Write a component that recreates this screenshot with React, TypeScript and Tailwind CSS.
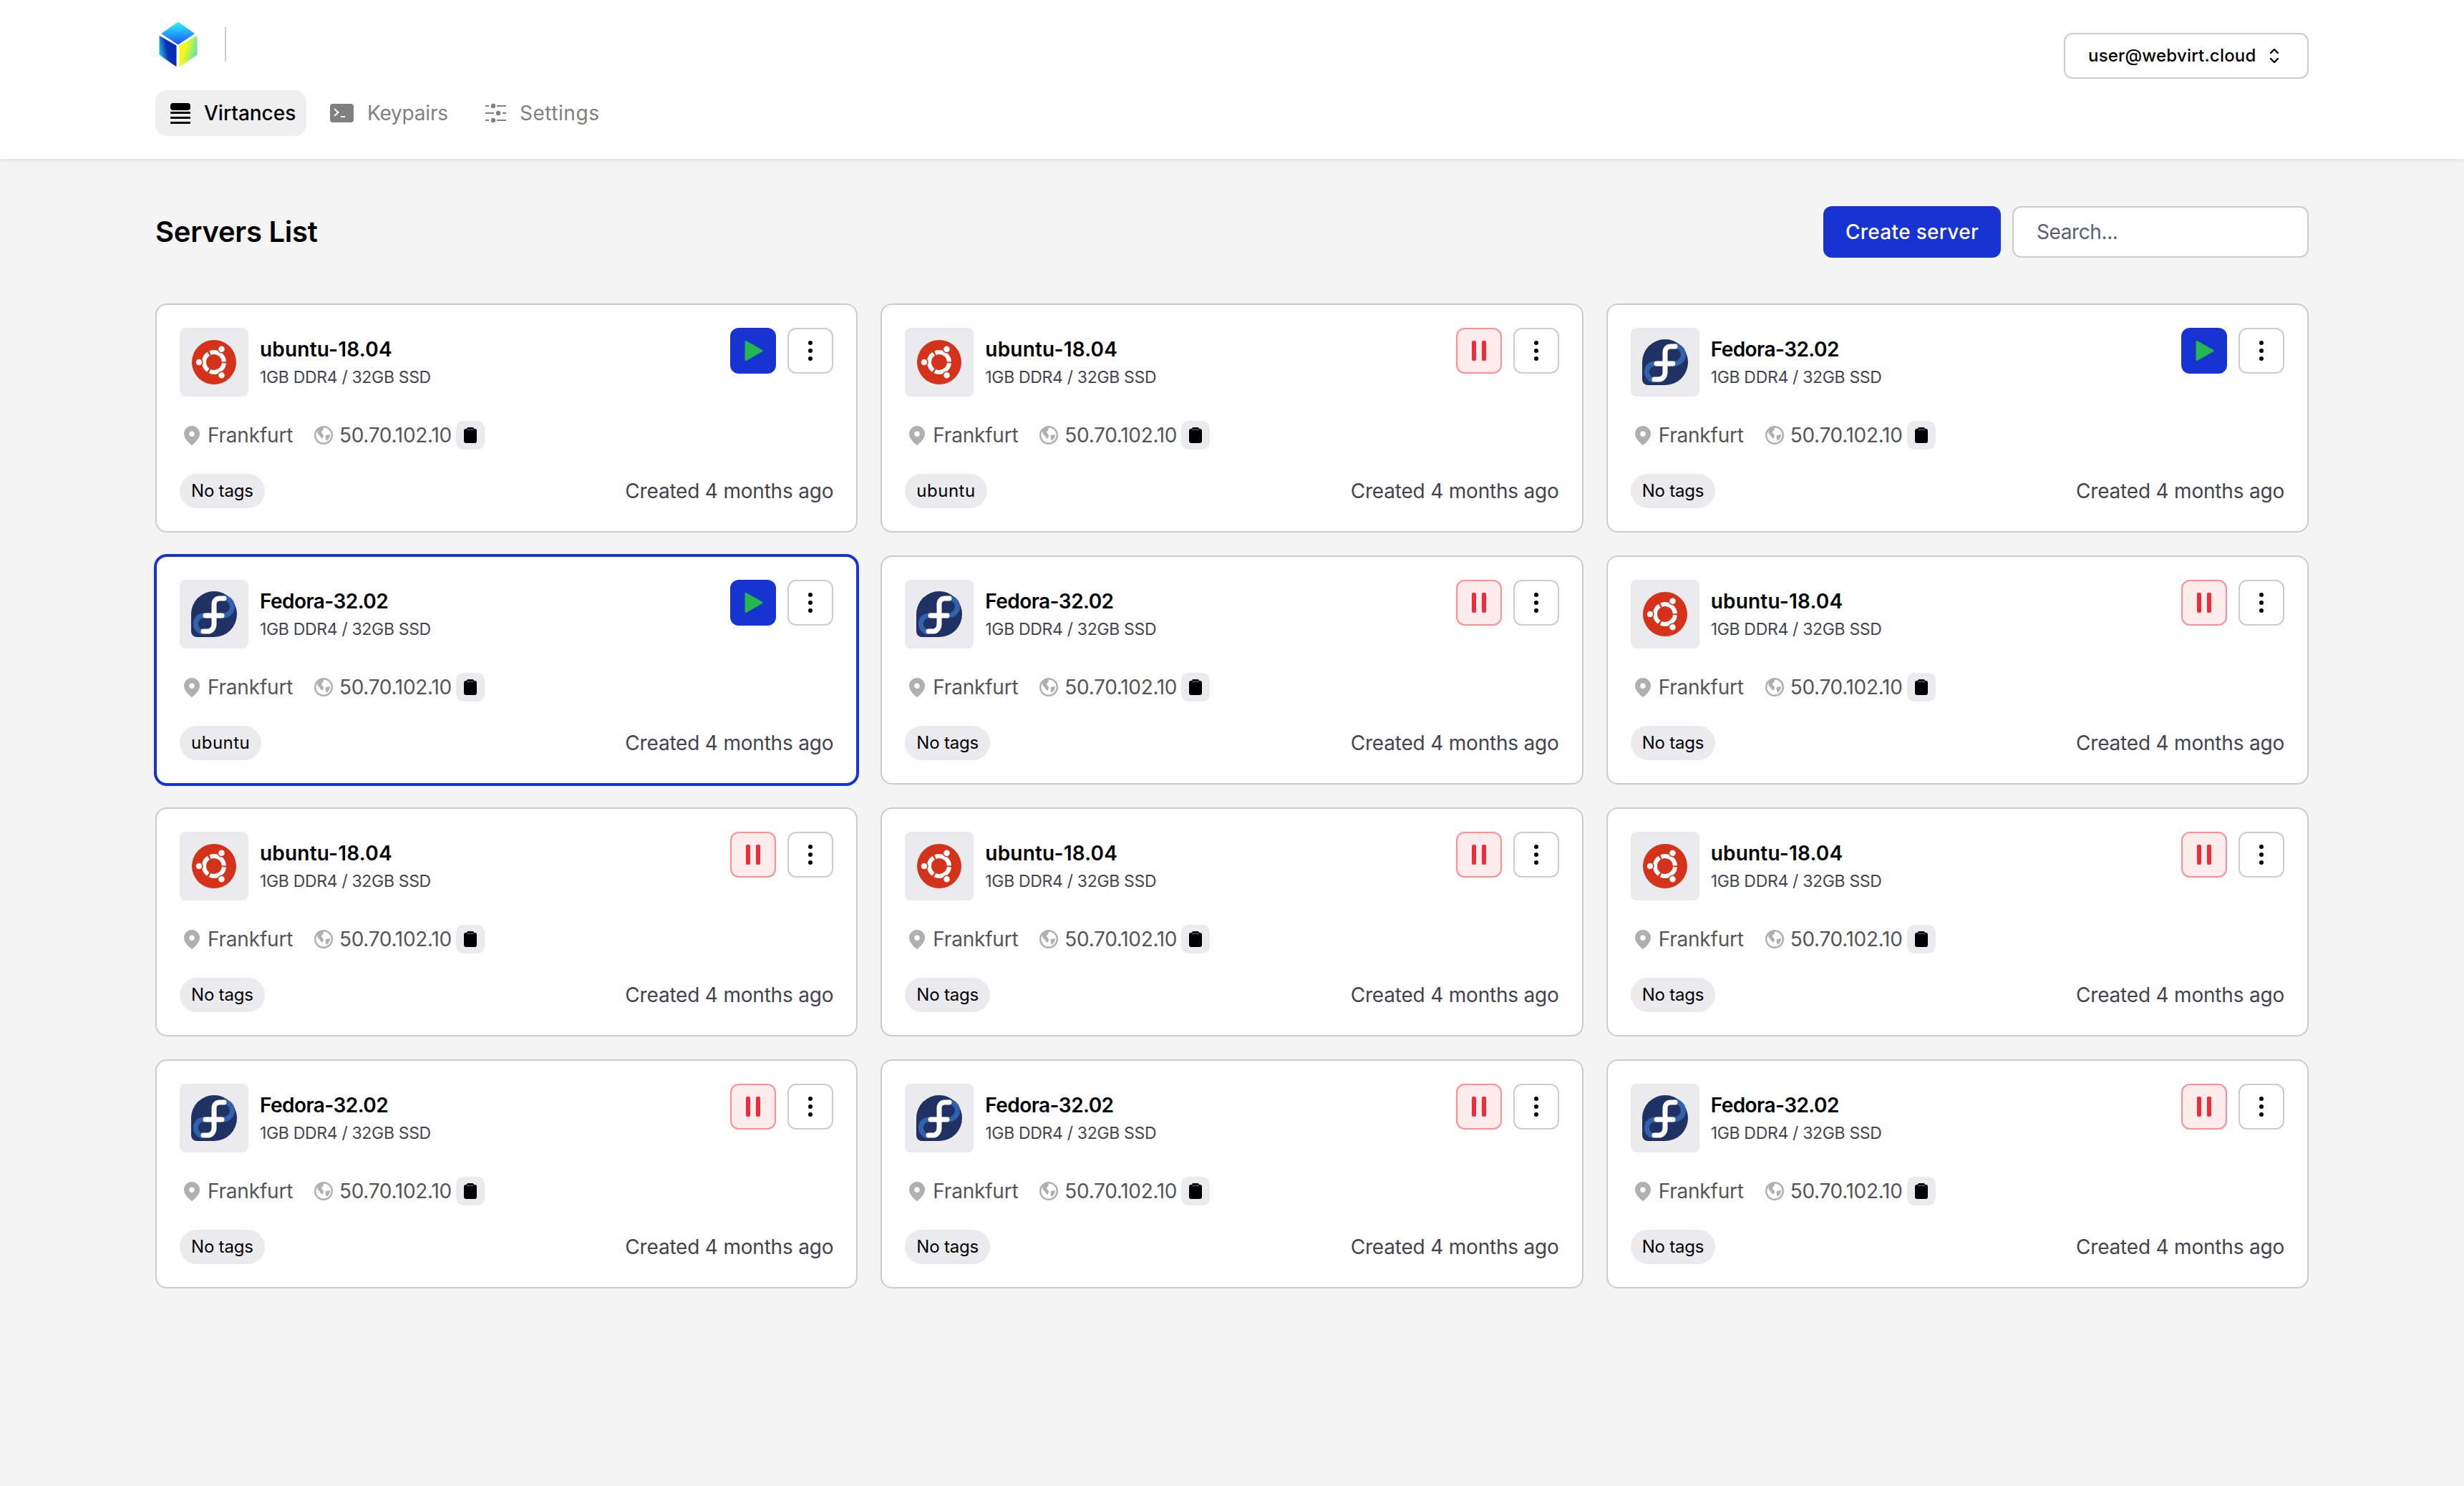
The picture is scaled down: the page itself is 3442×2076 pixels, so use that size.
const servers = [
  { os: "ubuntu", running: false, tag: "No tags" },
  { os: "ubuntu", running: true, tag: "ubuntu" },
  { os: "fedora", running: false, tag: "No tags" },
  { os: "fedora", running: false, tag: "ubuntu", selected: true },
  { os: "fedora", running: true, tag: "No tags" },
  { os: "ubuntu", running: true, tag: "No tags" },
  { os: "ubuntu", running: true, tag: "No tags" },
  { os: "ubuntu", running: true, tag: "No tags" },
  { os: "ubuntu", running: true, tag: "No tags" },
  { os: "fedora", running: true, tag: "No tags" },
  { os: "fedora", running: true, tag: "No tags" },
  { os: "fedora", running: true, tag: "No tags" },
];

const CubeLogo = () => (
  <svg width="54" height="62" viewBox="0 0 54 62">
    <defs>
      <linearGradient id="cubeTop" x1="0" y1="0" x2="0" y2="1">
        <stop offset="0" stopColor="#2df3ff" />
        <stop offset="1" stopColor="#1a55ee" />
      </linearGradient>
      <linearGradient id="cubeLeft" x1="0" y1="0.7" x2="0.8" y2="0.4">
        <stop offset="0" stopColor="#25c8ee" />
        <stop offset="0.6" stopColor="#0b2fb8" />
        <stop offset="1" stopColor="#0a2cb0" />
      </linearGradient>
      <linearGradient id="cubeRight" x1="0.1" y1="0.4" x2="1" y2="0.8">
        <stop offset="0.2" stopColor="#f2f91a" />
        <stop offset="1" stopColor="#45e4c0" />
      </linearGradient>
    </defs>
    <path d="M26.8 0 49.5 16 26.8 31 4 16z" fill="url(#cubeTop)" stroke="url(#cubeTop)" strokeLinejoin="round" strokeWidth="1" />
    <path d="M1 19.5 24 32.8V61.5L1 45.5z" fill="url(#cubeLeft)" stroke="url(#cubeLeft)" strokeLinejoin="round" strokeWidth="1" />
    <path d="M29 32.8 53 19.5V45.5L29 61.5z" fill="url(#cubeRight)" stroke="url(#cubeRight)" strokeLinejoin="round" strokeWidth="1" />
  </svg>
);

const UbuntuLogo = () => (
  <svg width="62" height="62" viewBox="0 0 62 62">
    <circle cx="31" cy="31" r="31" fill="#d4321a" />
    <circle cx="31" cy="31" r="14" fill="none" stroke="#fff" strokeWidth="6" strokeDasharray="26.8 2.52" strokeDashoffset="-1.26" />
    <circle cx="41.5" cy="12.8" r="5" fill="#fff" stroke="#d4321a" strokeWidth="1.5" />
    <circle cx="10" cy="31" r="5" fill="#fff" stroke="#d4321a" strokeWidth="1.5" />
    <circle cx="41.5" cy="49.2" r="5" fill="#fff" stroke="#d4321a" strokeWidth="1.5" />
  </svg>
);

const FedoraLogo = () => (
  <svg width="64" height="64" viewBox="0 0 64 64">
    <path d="M32 0a32 32 0 1 1 0 64H8a8 8 0 0 1-8-8V32A32 32 0 0 1 32 0z" fill="#1f3263" />
    <path d="M45 9a11.500 11.500 0 0 1 0 25H20" fill="none" stroke="#3360ab" strokeWidth="7" />
    <path d="M20 34a11.500 11.500 0 0 0-4 23" fill="none" stroke="#3360ab" strokeWidth="7" />
    <path d="M46 10h-6c-5 0-8 3-8 8v28c0 6-4 10-9 10h-6M20 34h23" fill="none" stroke="#fff" strokeWidth="7" strokeLinecap="round" />
  </svg>
);

const ServerCard = ({ os, running, tag, selected }: { os: string; running: boolean; tag: string; selected?: boolean }) => (
  <div
    className={`h-[320px] rounded-2xl border-2 bg-white p-8 ${
      selected ? "border-[#1733d1] ring-2 ring-[#1733d1]" : "border-[#cccccc]"
    }`}
  >
    <div className="flex justify-between">
      <div className="flex gap-4">
        <div className="flex h-24 w-24 items-center justify-center rounded-lg bg-[#ebebed]">
          {os === "ubuntu" ? <UbuntuLogo /> : <FedoraLogo />}
        </div>
        <div className="pt-[11px]">
          <div className={`text-[28px] leading-[38px] font-semibold text-black ${os === "ubuntu" ? "tracking-[0.2px]" : "tracking-[-0.55px]"}`}>
            {os === "ubuntu" ? "ubuntu-18.04" : "Fedora-32.02"}
          </div>
          <div className="text-[23px] leading-[40px] tracking-[-0.33px] text-[#44444f]">1GB DDR4 / 32GB SSD</div>
        </div>
      </div>
      <div className="flex gap-4">
        {running ? (
          <button className="flex h-16 w-16 items-center justify-center rounded-xl border-2 border-[#ff8f96] bg-[#fdecec]">
            <svg width="20" height="28" viewBox="0 0 20 28" fill="#ee2d3a">
              <rect x="0" width="6" height="28" rx="2" />
              <rect x="14" width="6" height="28" rx="2" />
            </svg>
          </button>
        ) : (
          <button className="flex h-16 w-16 items-center justify-center rounded-xl bg-[#1733d1]">
            <svg width="26" height="30" viewBox="0 0 26 30" className="ml-[2px]">
              <path d="M2 2.500 24 15 2 27.500z" fill="#22b84f" stroke="#22b84f" strokeWidth="3" strokeLinejoin="round" />
            </svg>
          </button>
        )}
        <button className="flex h-16 w-16 items-center justify-center rounded-xl border-2 border-[#cccccc] bg-white">
          <svg width="6" height="28" viewBox="0 0 6 28" fill="#000">
            <circle cx="3" cy="3" r="3" />
            <circle cx="3" cy="14" r="3" />
            <circle cx="3" cy="25" r="3" />
          </svg>
        </button>
      </div>
    </div>

    <div className="mt-[34px] flex h-10 items-center pl-[6px] text-[28px] tracking-[-0.45px] text-[#555558]">
      <svg width="22" height="27" viewBox="0 0 22 27" className="mr-[11px]">
        <path
          fillRule="evenodd"
          d="M11 0a11 11 0 0 1 11 11c0 6-5.500 12-11 16C5.500 23 0 17 0 11A11 11 0 0 1 11 0zm0 7.500a3.700 3.700 0 1 0 0 7.400 3.700 3.700 0 0 0 0-7.400z"
          fill="#b0b0b0"
        />
      </svg>
      <span className="w-[120px] tracking-[-0.2px]">Frankfurt</span>
      <svg width="26" height="26" viewBox="0 0 26 26" className="mr-[9px] ml-[29px]">
        <circle cx="13" cy="13" r="11.800" fill="none" stroke="#b0b0b0" strokeWidth="2.400" />
        <path d="M5 5c3-3 6-3 8-3 0 3-1 5-3 6 0 3 2 3 3 5 0 2-1 4-2 5-3-2-3-5-6-7-1-2-1-4 0-6zM16 13l6-1c0 4-2 7-5 9-1-3-2-5-1-8z" fill="#b0b0b0" />
      </svg>
      <span className="w-[155px] whitespace-nowrap tracking-[-0.3px]">50.70.102.10</span>
      <div className="ml-[8px] flex h-10 w-10 items-center justify-center rounded-[10px] bg-[#ebebed]">
        <svg width="18" height="22" viewBox="0 0 18 22" fill="#000">
          <path d="M6 0h6a2 2 0 0 1 2 2h1a3 3 0 0 1 3 3v14a3 3 0 0 1-3 3H3a3 3 0 0 1-3-3V5a3 3 0 0 1 3-3h1a2 2 0 0 1 2-2z" />
          <path d="M4 3.500h10" stroke="#8a8a8a" strokeWidth="0.800" />
        </svg>
      </div>
    </div>

    <div className="mt-[34px] flex items-center justify-between">
      <span className={`flex h-12 items-center rounded-full bg-[#ebebed] px-4 text-[24px] text-black ${tag === "ubuntu" ? "tracking-[0.5px]" : "tracking-[-0.2px]"}`}>{tag}</span>
      <span className="text-[28px] tracking-[-0.2px] text-[#44444f]">Created 4 months ago</span>
    </div>
  </div>
);

const App = () => {
  return (
    <div className="min-h-[2076px] bg-[#f4f4f4] font-['Inter',sans-serif]">
      <header className="h-[222px] bg-white shadow-[0_2px_6px_rgba(0,0,0,0.08)]">
        <div className="mx-auto w-[3008px]">
          <div className="flex justify-between">
            <div className="flex items-start pt-[31px] pl-[5px]">
              <CubeLogo />
              <div className="mt-[7px] ml-[38px] h-12 w-[2px] bg-[#cccccc]" />
            </div>
            <button className="mt-[46px] flex h-16 w-[342px] items-center rounded-xl border-2 border-[#cccccc] bg-white pl-8 text-[24px] font-medium tracking-[0.2px] text-black">
              <span className="w-[233px] whitespace-nowrap">user@webvirt.cloud</span>
              <svg width="14" height="22" viewBox="0 0 14 22" className="ml-5" fill="none" stroke="#000" strokeWidth="2.400" strokeLinecap="round" strokeLinejoin="round">
                <path d="M2 7l5-5 5 5M2 15l5 5 5-5" />
              </svg>
            </button>
          </div>
          <nav className="mt-[16px] flex h-16 items-center text-[28px]">
            <a className="flex h-16 w-[211px] items-center rounded-2xl bg-[#efefef] pl-[21px] font-medium text-black">
              <svg width="28" height="29" viewBox="0 0 28 29" fill="#000" className="mr-[19px]">
                <rect width="28" height="10" rx="4" />
                <rect y="12" width="28" height="3" rx="1" />
                <rect y="19" width="28" height="3" rx="1" />
                <rect y="26" width="28" height="3" rx="1" />
              </svg>
              Virtances
            </a>
            <a className="ml-[33px] flex items-center tracking-[-0.2px] text-[#808080]">
              <svg width="33" height="26" viewBox="0 0 33 26" className="mr-[19px]">
                <rect width="33" height="26" rx="4" fill="#808080" />
                <path d="M6 7l5.500 5L6 17" fill="none" stroke="#fff" strokeWidth="2" />
                <path d="M15 18h6" stroke="#fff" strokeWidth="2" />
              </svg>
              Keypairs
            </a>
            <a className="ml-[52px] flex items-center tracking-[0.55px] text-[#808080]">
              <svg width="29" height="28" viewBox="0 0 29 28" fill="#808080" className="mr-[19px]">
                <rect y="3" width="5" height="2" />
                <circle cx="11" cy="4" r="3.200" />
                <rect x="16" y="3" width="13" height="2" />
                <rect y="13" width="12" height="2" />
                <circle cx="18" cy="14" r="3.200" />
                <rect x="24" y="13" width="5" height="2" />
                <rect y="23" width="5" height="2" />
                <circle cx="11" cy="24" r="3.200" />
                <rect x="16" y="23" width="13" height="2" />
              </svg>
              Settings
            </a>
          </nav>
        </div>
      </header>

      <main className="mx-auto w-[3008px]">
        <div className="flex h-[202px] items-center justify-between pt-[2px]">
          <h1 className="text-[40px] font-semibold tracking-[-0.25px] text-black">Servers List</h1>
          <div className="flex gap-4">
            <button className="h-[72px] w-[248px] rounded-xl bg-[#1733d1] text-[28px] font-medium tracking-[0.3px] text-white">Create server</button>
            <input
              placeholder="Search..."
              className="h-[72px] w-[414px] rounded-xl border-2 border-[#cccccc] bg-white px-8 text-[28px] tracking-[-0.4px] placeholder:text-[#5b5f73]"
            />
          </div>
        </div>
        <div className="grid grid-cols-3 gap-8">
          {servers.map((server, i) => (
            <ServerCard key={i} {...server} />
          ))}
        </div>
      </main>
    </div>
  );
};

export default App;
